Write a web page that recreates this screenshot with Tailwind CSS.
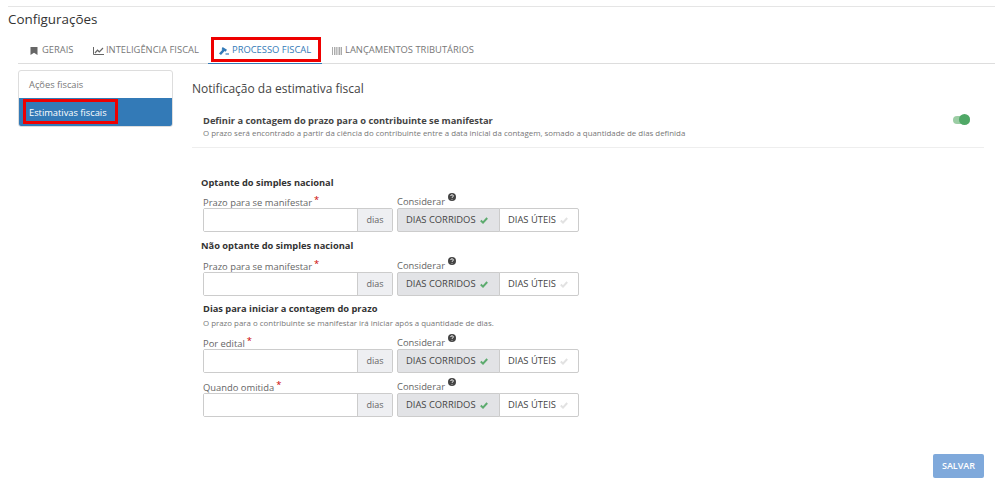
<!DOCTYPE html>
<html lang="pt-BR">
<head>
<meta charset="utf-8">
<script src="https://cdn.jsdelivr.net/npm/@tailwindcss/browser@4"></script>
</head>
<body class="bg-white font-['Open_Sans',sans-serif] text-[#333] overflow-hidden">
<div class="relative w-[995px] h-[490px] pt-[6px] pl-2 overflow-hidden">
  <div class="h-px bg-[#e5e5e5]"></div>
  <h1 class="text-[13.4px] leading-[18px] mt-[3px] text-[#333]">Configurações</h1>

  <div class="ml-[10px] mt-[12px] h-[24px] border-b border-[#ddd] flex text-[9.4px] leading-[14px] text-[#777]">
    <div class="h-[24px] w-[65px] shrink-0 pl-3 pt-[3px] flex items-start gap-[4px]">
      <svg class="mt-[4px]" width="8" height="8" viewBox="0 0 8 8"><path d="M.5 0h7v8L4 5.8.5 8z" fill="#666"/></svg>
      <span>GERAIS</span>
    </div>
    <div class="h-[24px] w-[125px] shrink-0 pl-[10px] pt-[3px] flex items-start gap-[2px]">
      <svg class="mt-[4px]" width="11" height="8" viewBox="0 0 11 8" fill="none"><path d="M.5 0v7.5H11" stroke="#666"/><path d="M2 6 4.5 3.2 6.3 4.8 10 1" stroke="#666" stroke-width="1.2"/></svg>
      <span>INTELIGÊNCIA FISCAL</span>
    </div>
    <div class="relative h-[24px] w-[114px] shrink-0 pl-[11px] pt-[3px] flex items-start gap-[3px] border-b border-[#337ab7] text-[#337ab7]">
      <svg class="mt-[4px]" width="10" height="8" viewBox="0 0 10 8"><path d="M3.6 0 8 2.8 6.6 4.8 5.6 4.1 2 8 0 6.5 3.4 2.8 2.6 2.2z" fill="#337ab7"/><path d="M6.5 6.4H10v1.2H6.5z" fill="#337ab7"/></svg>
      <span>PROCESSO FISCAL</span>
      <div class="absolute left-[3px] top-[-3px] w-[110px] h-[25px] border-[3px] border-[#ee0000]"></div>
    </div>
    <div class="h-[24px] pl-[10px] pt-[3px] flex items-start gap-[3px]">
      <svg class="mt-[4px]" width="10" height="8" viewBox="0 0 10 8" fill="#aaa"><path d="M0 0h1v8H0zM2 0h1v8H2zM3.6 0h1.2v8H3.6zM5.5 0h1v8h-1zM7 0h1v8H7zM8.6 0H10v8H8.6z"/></svg>
      <span>LANÇAMENTOS TRIBUTÁRIOS</span>
    </div>
  </div>

  <div class="flex mt-[6px] ml-[10px]">
    <aside class="w-[155px] h-[57px] shrink-0 rounded-[3px] border border-[#ddd] overflow-hidden text-[9.3px]">
      <div class="h-[27px] pl-[10px] flex items-center text-[#777]">Ações fiscais</div>
      <div class="h-[29px] pl-[10px] flex items-center bg-[#337ab7] text-white">Estimativas fiscais</div>
    </aside>
    <div class="absolute left-[23px] top-[99px] w-[95px] h-[25px] border-[3px] border-[#ee0000]"></div>

    <main class="ml-[19px] w-[792px]">
      <h2 class="text-[12px] leading-[16px] mt-[11px] text-[#444]">Notificação da estimativa fiscal</h2>

      <div class="h-[48px] mt-[3px] border-b border-[#eee] pl-[11px] pr-[14px] flex items-center justify-between">
        <div class="pt-[6px]">
          <div class="text-[9.3px] leading-[13px] font-bold text-[#444]">Definir a contagem do prazo para o contribuinte se manifestar</div>
          <div class="text-[7.9px] leading-[13px] text-[#777]">O prazo será encontrado a partir da ciência do contribuinte entre a data inicial da contagem, somado a quantidade de dias definida</div>
        </div>
        <div class="relative w-[17px] h-[8px] rounded-full bg-[#9bcda4] mt-[-7px]">
          <div class="absolute right-0 top-[-2px] w-[11px] h-[11px] rounded-full bg-[#50a867]"></div>
        </div>
      </div>

      <div class="pl-[9px] pt-[28px] text-[9.3px] leading-[13px] font-bold text-[#333]">Optante do simples nacional</div>
      <div class="flex ml-[11px] mt-[5px] gap-[4px]">
        <div class="w-[190px]">
          <div class="h-[14px] text-[9.4px] leading-[12px] text-[#666]">Prazo para se manifestar<span class="ml-[2px] text-[#c00] align-[3px]">*</span></div>
          <div class="flex h-[24px] border border-[#ccc] rounded-[2px]">
            <div class="w-[153px] bg-white"></div>
            <div class="flex-1 flex items-center justify-center bg-[#eeeff2] border-l border-[#ccc] text-[9px] text-[#666]">dias</div>
          </div>
        </div>
        <div class="w-[182px]">
          <div class="h-[14px] flex items-start text-[9.4px] leading-[15px] text-[#666]">Considerar
            <svg class="ml-[3px] mt-[-1px]" width="8" height="8" viewBox="0 0 8 8"><circle cx="4" cy="4" r="4" fill="#444"/><path d="M2.7 3a1.3 1.2 0 1 1 1.8 1.1c-.4.2-.5.3-.5.7M4 6v.6" stroke="#fff" fill="none"/></svg>
          </div>
          <div class="flex h-[24px] text-[9.4px] text-[#444]">
            <div class="w-[103px] pl-2 flex items-center gap-[4px] bg-[#e2e3e6] border border-[#ccc] rounded-l-[2px]">DIAS CORRIDOS
              <svg width="8" height="7" viewBox="0 0 8 7" fill="none"><path d="M.8 3.5 3 5.6 7.2 1" stroke="#5cab6e" stroke-width="2"/></svg>
            </div>
            <div class="w-[80px] ml-[-1px] pl-2 flex items-center gap-[4px] bg-white border border-[#ccc] rounded-r-[2px]">DIAS ÚTEIS
              <svg width="8" height="7" viewBox="0 0 8 7" fill="none"><path d="M.8 3.5 3 5.6 7.2 1" stroke="#e2e2e2" stroke-width="2"/></svg>
            </div>
          </div>
        </div>
      </div>

      <div class="pl-[9px] pt-[7px] text-[9.3px] leading-[13px] font-bold text-[#333]">Não optante do simples nacional</div>
      <div class="flex ml-[11px] mt-[6px] gap-[4px]">
        <div class="w-[190px]">
          <div class="h-[14px] text-[9.4px] leading-[12px] text-[#666]">Prazo para se manifestar<span class="ml-[2px] text-[#c00] align-[3px]">*</span></div>
          <div class="flex h-[24px] border border-[#ccc] rounded-[2px]">
            <div class="w-[153px] bg-white"></div>
            <div class="flex-1 flex items-center justify-center bg-[#eeeff2] border-l border-[#ccc] text-[9px] text-[#666]">dias</div>
          </div>
        </div>
        <div class="w-[182px]">
          <div class="h-[14px] flex items-start text-[9.4px] leading-[15px] text-[#666]">Considerar
            <svg class="ml-[3px] mt-[-1px]" width="8" height="8" viewBox="0 0 8 8"><circle cx="4" cy="4" r="4" fill="#444"/><path d="M2.7 3a1.3 1.2 0 1 1 1.8 1.1c-.4.2-.5.3-.5.7M4 6v.6" stroke="#fff" fill="none"/></svg>
          </div>
          <div class="flex h-[24px] text-[9.4px] text-[#444]">
            <div class="w-[103px] pl-2 flex items-center gap-[4px] bg-[#e2e3e6] border border-[#ccc] rounded-l-[2px]">DIAS CORRIDOS
              <svg width="8" height="7" viewBox="0 0 8 7" fill="none"><path d="M.8 3.5 3 5.6 7.2 1" stroke="#5cab6e" stroke-width="2"/></svg>
            </div>
            <div class="w-[80px] ml-[-1px] pl-2 flex items-center gap-[4px] bg-white border border-[#ccc] rounded-r-[2px]">DIAS ÚTEIS
              <svg width="8" height="7" viewBox="0 0 8 7" fill="none"><path d="M.8 3.5 3 5.6 7.2 1" stroke="#e2e2e2" stroke-width="2"/></svg>
            </div>
          </div>
        </div>
      </div>

      <div class="pl-[11px] pt-[6px] text-[9.3px] leading-[13px] font-bold text-[#333]">Dias para iniciar a contagem do prazo</div>
      <div class="pl-[11px] mt-[2px] text-[7.9px] leading-[12px] text-[#777]">O prazo para o contribuinte se manifestar irá iniciar após a quantidade de dias.</div>
      <div class="flex ml-[11px] mt-[6px] gap-[4px]">
        <div class="w-[190px]">
          <div class="h-[14px] text-[9.4px] leading-[12px] text-[#666]">Por edital<span class="ml-[2px] text-[#c00] align-[3px]">*</span></div>
          <div class="flex h-[24px] border border-[#ccc] rounded-[2px]">
            <div class="w-[153px] bg-white"></div>
            <div class="flex-1 flex items-center justify-center bg-[#eeeff2] border-l border-[#ccc] text-[9px] text-[#666]">dias</div>
          </div>
        </div>
        <div class="w-[182px]">
          <div class="h-[14px] flex items-start text-[9.4px] leading-[15px] text-[#666]">Considerar
            <svg class="ml-[3px] mt-[-1px]" width="8" height="8" viewBox="0 0 8 8"><circle cx="4" cy="4" r="4" fill="#444"/><path d="M2.7 3a1.3 1.2 0 1 1 1.8 1.1c-.4.2-.5.3-.5.7M4 6v.6" stroke="#fff" fill="none"/></svg>
          </div>
          <div class="flex h-[24px] text-[9.4px] text-[#444]">
            <div class="w-[103px] pl-2 flex items-center gap-[4px] bg-[#e2e3e6] border border-[#ccc] rounded-l-[2px]">DIAS CORRIDOS
              <svg width="8" height="7" viewBox="0 0 8 7" fill="none"><path d="M.8 3.5 3 5.6 7.2 1" stroke="#5cab6e" stroke-width="2"/></svg>
            </div>
            <div class="w-[80px] ml-[-1px] pl-2 flex items-center gap-[4px] bg-white border border-[#ccc] rounded-r-[2px]">DIAS ÚTEIS
              <svg width="8" height="7" viewBox="0 0 8 7" fill="none"><path d="M.8 3.5 3 5.6 7.2 1" stroke="#e2e2e2" stroke-width="2"/></svg>
            </div>
          </div>
        </div>
      </div>
      <div class="flex ml-[11px] mt-[6px] gap-[4px]">
        <div class="w-[190px]">
          <div class="h-[14px] text-[9.4px] leading-[12px] text-[#666]">Quando omitida<span class="ml-[2px] text-[#c00] align-[3px]">*</span></div>
          <div class="flex h-[24px] border border-[#ccc] rounded-[2px]">
            <div class="w-[153px] bg-white"></div>
            <div class="flex-1 flex items-center justify-center bg-[#eeeff2] border-l border-[#ccc] text-[9px] text-[#666]">dias</div>
          </div>
        </div>
        <div class="w-[182px]">
          <div class="h-[14px] flex items-start text-[9.4px] leading-[15px] text-[#666]">Considerar
            <svg class="ml-[3px] mt-[-1px]" width="8" height="8" viewBox="0 0 8 8"><circle cx="4" cy="4" r="4" fill="#444"/><path d="M2.7 3a1.3 1.2 0 1 1 1.8 1.1c-.4.2-.5.3-.5.7M4 6v.6" stroke="#fff" fill="none"/></svg>
          </div>
          <div class="flex h-[24px] text-[9.4px] text-[#444]">
            <div class="w-[103px] pl-2 flex items-center gap-[4px] bg-[#e2e3e6] border border-[#ccc] rounded-l-[2px]">DIAS CORRIDOS
              <svg width="8" height="7" viewBox="0 0 8 7" fill="none"><path d="M.8 3.5 3 5.6 7.2 1" stroke="#5cab6e" stroke-width="2"/></svg>
            </div>
            <div class="w-[80px] ml-[-1px] pl-2 flex items-center gap-[4px] bg-white border border-[#ccc] rounded-r-[2px]">DIAS ÚTEIS
              <svg width="8" height="7" viewBox="0 0 8 7" fill="none"><path d="M.8 3.5 3 5.6 7.2 1" stroke="#e2e2e2" stroke-width="2"/></svg>
            </div>
          </div>
        </div>
      </div>

      <div class="flex justify-end mt-[37px]">
        <div class="w-[51px] h-[24px] rounded-[2px] bg-[#7fa9db] text-white text-[9px] font-semibold flex items-center justify-center">SALVAR</div>
      </div>
    </main>
  </div>
</div>
</body>
</html>
